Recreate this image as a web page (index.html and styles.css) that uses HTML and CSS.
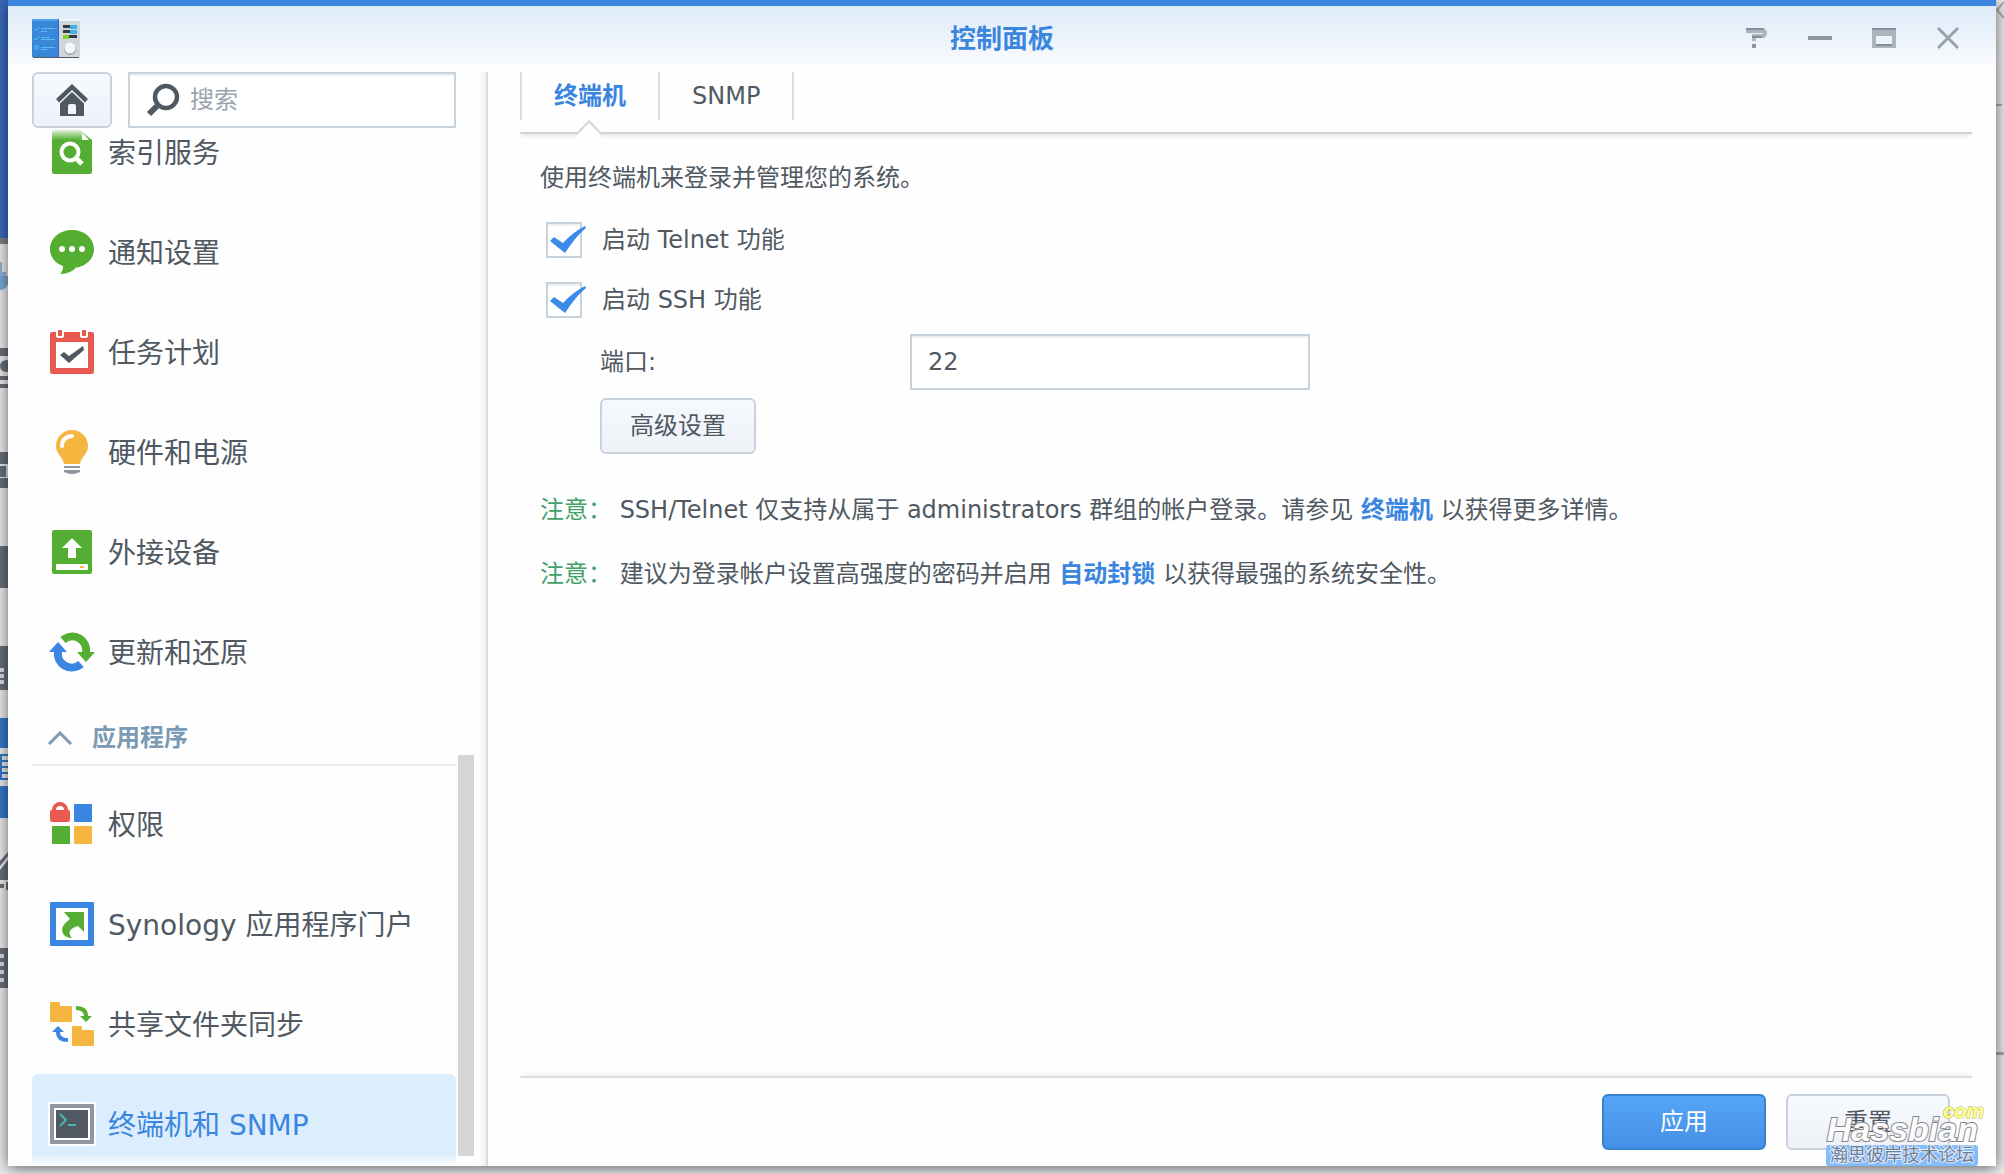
FILE: index.html
```html
<!DOCTYPE html>
<html lang="zh-CN">
<head>
<meta charset="utf-8">
<title>控制面板</title>
<link rel="stylesheet" href="styles.css">
</head>
<body>
<div class="desktop">
  <svg class="desk-left" width="8" height="1174" aria-hidden="true">
    <rect width="8" height="238" fill="#3a6cc0"/>
    <rect y="238" width="8" height="6" fill="#80858c"/>
    <path d="M0 262h2v10h4v6H0z" fill="#8fb4d4"/><path d="M0 276h8v8q-3 6-8 6z" fill="#7ba9d4"/>
    <g fill="#67707a">
      <path d="M0 348h8v8H0zM8 360q-8 0-8 6t8 6zM0 376h8v4H0zM0 384h8v4H0z"/>
      <path d="M0 452h8v12H0zM0 466h6v11H0zM0 478h8v10H0z"/>
      <path d="M0 546h8v42H0z"/>
      <path d="M0 646h8v44H0z"/>
      <path d="M0 861 8 852v4L0 866zM0 870 8 860v20H0zM0 884h4v4H0zM6 882h2v8H6z"/>
      <path d="M0 948h8v40H0z"/>
    </g>
    <path d="M0 668h4v4H0zm0 6h4v4H0zm0 6h4v4H0zM0 954h4v4H0zm0 8h4v4H0zm0 8h4v4H0zm0 8h4v4H0z" fill="#ddd"/>
    <path d="M0 718h8v30H0zM0 754h8v2H2v22h6v2H0zM2 760h6v2H2zm0 6h6v2H2zm0 6h6v2H2zM0 786h8v32H0z" fill="#3379cc"/>
  </svg>
  <svg class="desk-right" width="8" height="1174" aria-hidden="true">
    <path d="M8 2 1 10l7 8" fill="none" stroke="#b0b0b0" stroke-width="2"/>
    <path d="M0 104h6v2H0zM0 1052h8v3H0z" fill="#a8a8a8"/>
  </svg>

  <main class="window">
    <header class="titlebar">
      <svg class="app-icon" width="48" height="40" viewBox="0 0 48 40" aria-hidden="true">
        <rect x="1" y="36" width="46" height="3" fill="#555c63"/>
        <rect width="28" height="38" fill="#3a86d8"/><rect width="27" height="2" fill="#4aa5ee"/><rect x="26" width="2" height="38" fill="#2a6cc4"/>
        <rect x="27" width="21" height="38" fill="#cfd6dc"/><rect x="27" width="21" height="2" fill="#f4f5f6"/>
        <path d="M2 10l2 2 3-4M2 19l2 2 3-4M3 27h3v3H3zM9 9.500h14M9 12.500h6M9 18.500h9M9 20.500h14M9 28.500h14M9 30.500h6" fill="none" stroke="#55bdf2" stroke-width="1"/>
        <path d="M31 6h14v3H31zM31 11h14v3H31zM31 16h14v3H31z" fill="#363c44"/>
        <path d="M38 6h7v4h-7zM38 11h7v4h-7z" fill="#3fb0ef"/><path d="M31 16h6v4h-6z" fill="#7fd22e"/>
        <circle cx="38" cy="30" r="6" fill="#9ba4ac"/><circle cx="38" cy="29" r="5.500" fill="#f5f8fa"/>
      </svg>
      <h1 class="window-title">控制面板</h1>
      <div class="window-tools">
        <button class="tool" type="button" aria-label="帮助"><svg width="24" height="24" viewBox="-2 0 24 24"><path d="M0 5h17q2 0 2 2v0q0 3-3 3H8v5" fill="none" stroke="#acb4bd" stroke-width="4"/><path d="M0 3h18M6 11h10" stroke="#868f99" stroke-width="2"/><path d="M6 18h4v4H6z" fill="#8d959f"/></svg></button>
        <button class="tool" type="button" aria-label="最小化"><svg width="24" height="24" viewBox="0 0 24 24"><path d="M0 10h24v4H0z" fill="#8e97a1"/></svg></button>
        <button class="tool" type="button" aria-label="最大化"><svg width="24" height="24" viewBox="0 0 24 24"><path fill-rule="evenodd" d="M0 2h24v20H0zM4 10v10h16V10z" fill="#acb4bd"/><path d="M0 2h24v2H0zM4 18h16v2H4z" fill="#868f99"/></svg></button>
        <button class="tool" type="button" aria-label="关闭"><svg width="24" height="24" viewBox="0 0 24 24"><path d="M2 2 22 22M22 2 2 22" fill="none" stroke="#98a1ab" stroke-width="3"/></svg></button>
      </div>
    </header>

    <div class="columns">
      <aside class="sidebar">
        <div class="search-row">
          <button class="button home" type="button" aria-label="主页"><svg width="32" height="32" viewBox="0 0 32 32"><path d="M16 0 32 15l-3 3.500L16 6 3 18.500 0 15z" fill="#505962"/><path fill-rule="evenodd" d="M4 19.500 16 8l12 11.500V32H4zM12 30h8v-8q0-2-2-2h-4q-2 0-2 2z" fill="#505962"/></svg></button>
          <label class="search">
            <svg width="34" height="34" viewBox="0 0 34 34"><circle cx="20" cy="14" r="11" fill="none" stroke="#505962" stroke-width="4.500"/><path d="M11 23 3 31" stroke="#505962" stroke-width="6"/></svg>
            <input type="search" placeholder="搜索" aria-label="搜索">
          </label>
        </div>
        <div class="list-area">
          <nav class="list">
            <div class="list-scroll">
              <a class="item" href="#index"><svg class="icon" viewBox="0 0 48 48"><path d="M4 4q0-2 2-2h26l12 10v32q0 2-2 2H6q-2 0-2-2z" fill="#53ae32"/><path d="M34 5v7h7z" fill="#fff"/><circle cx="22" cy="24" r="8.500" fill="none" stroke="#fff" stroke-width="4"/><path d="M28 30l6 6" stroke="#fff" stroke-width="5"/></svg>索引服务</a>
              <a class="item" href="#notify"><svg class="icon" viewBox="0 0 48 48"><path d="M24 2c12 0 22 8 22 19S36 39 28 39.500C25 43 20 46 12 46c2-2 3-4 3-8C7 35 2 29 2 21 2 10 12 2 24 2z" fill="#53ae32"/><g fill="#fff"><circle cx="14" cy="21" r="3"/><circle cx="24" cy="21" r="3"/><circle cx="34" cy="21" r="3"/></g></svg>通知设置</a>
              <a class="item" href="#tasks"><svg class="icon" viewBox="0 0 48 48"><path d="M4 4h4v4q0 2 2 2h4q2 0 2-2V4h16v4q0 2 2 2h4q2 0 2-2V4h4q2 0 2 2v38q0 2-2 2H4q-2 0-2-2V6q0-2 2-2zM10 2h4v6h-4zM34 2h4v6h-4z" fill="#e8594f"/><path d="M8 14h32v26H8z" fill="#fff"/><path d="M12 27l4-3 5 4 14-10 1 4-15 13z" fill="#505962"/></svg>任务计划</a>
              <a class="item" href="#power"><svg class="icon" viewBox="0 0 48 48"><path d="M24 2c9 0 16 7 16 16 0 8-7 11-8 18H16C15 29 8 26 8 18 8 9 15 2 24 2z" fill="#f4b63f"/><path d="M14 18q0-9 10-10" fill="none" stroke="#fff" stroke-width="4" stroke-linecap="round"/><path d="M16 38h16v2H16zM16 42h16v2q-4 2-8 2t-8-2z" fill="#8e97a1"/></svg>硬件和电源</a>
              <a class="item" href="#devices"><svg class="icon" viewBox="0 0 48 48"><rect x="4" y="2" width="40" height="44" rx="2" fill="#53ae32"/><path d="M24 10 34 20h-6v10h-8V20h-6z" fill="#fff"/><rect x="8" y="36" width="32" height="6" rx="1" fill="#fff"/><path d="M32 38h4v2h-4z" fill="#f4b63f"/></svg>外接设备</a>
              <a class="item" href="#update"><svg class="icon" viewBox="0 0 48 48"><path d="M15 12A14 14 0 0 1 38 25" fill="none" stroke="#53ae32" stroke-width="8"/><path d="M29 24h18L38 34z" fill="#53ae32"/><path d="M33 36A14 14 0 0 1 10 23" fill="none" stroke="#3a86e0" stroke-width="8"/><path d="M1 24h18L10 14z" fill="#3a86e0"/></svg>更新和还原</a>
              <h2 class="section"><svg width="24" height="14" viewBox="0 0 24 14"><path d="M1 13 12 2l11 11" fill="none" stroke="#7a9ab5" stroke-width="3"/></svg>应用程序</h2>
              <a class="item" href="#privileges"><svg class="icon" viewBox="0 0 48 48"><path d="M6 13v-3a6 6 0 0 1 12 0v3" fill="none" stroke="#e8594f" stroke-width="4"/><rect x="2" y="10" width="20" height="12" rx="2" fill="#e8594f"/><rect x="26" y="4" width="18" height="18" rx="1" fill="#3a86e0"/><rect x="4" y="26" width="18" height="18" rx="1" fill="#53ae32"/><rect x="26" y="26" width="18" height="18" rx="1" fill="#f4b63f"/></svg>权限</a>
              <a class="item" href="#portal"><svg class="icon" viewBox="0 0 48 48"><rect x="2" y="2" width="44" height="44" rx="1" fill="#3a86e0"/><path d="M8 8h32v32H8z" fill="#fff"/><path d="M16 12h20v20l-6-6q-13 4-6 12-9 0-10-8 0-5 8-11z" fill="#53ae32"/></svg>Synology 应用程序门户</a>
              <a class="item" href="#sync"><svg class="icon" viewBox="0 0 48 48"><path d="M2 3q0-1 1-1h8q1 0 1 1v3h11q1 0 1 1v14q0 1-1 1H3q-1 0-1-1zM24 27q0-1 1-1h8q1 0 1 1v3h11q1 0 1 1v14q0 1-1 1H25q-1 0-1-1z" fill="#f4b63f"/><path d="M28 8q10 0 10 8" fill="none" stroke="#53ae32" stroke-width="4"/><path d="M32 16h12l-6 6z" fill="#53ae32"/><path d="M20 40q-10 0-10-8" fill="none" stroke="#3a86e0" stroke-width="4"/><path d="M4 32h12l-6-6z" fill="#3a86e0"/></svg>共享文件夹同步</a>
              <a class="item selected" href="#terminal" aria-current="page"><svg class="icon" viewBox="0 0 48 48"><rect y="2" width="48" height="44" rx="3" fill="#fff"/><rect x="2" y="4" width="44" height="40" rx="1" fill="#8e97a1"/><path d="M6 8h36v32H6z" fill="#fff"/><path d="M8 10h32v28H8z" fill="#505962"/><path d="M12 14l6 6-6 6M20 25h8" fill="none" stroke="#45b8bd" stroke-width="2"/></svg>终端机和 SNMP</a>
            </div>
          </nav>
          <div class="track"><div class="thumb"></div></div>
        </div>
      </aside>

      <section class="content">
        <div class="tabs" role="tablist">
          <button class="tab active" type="button" role="tab" aria-selected="true">终端机<svg class="notch" width="28" height="18" viewBox="0 0 28 18" aria-hidden="true"><path d="M2 13 14 1l12 12v5H2z" fill="#fefefe"/><path d="M1 13.500h1L14 1.500l12 12h1" fill="none" stroke="#d4d4d4" stroke-width="2"/></svg></button>
          <button class="tab" type="button" role="tab" aria-selected="false">SNMP</button>
        </div>
        <form class="panel">
          <p class="intro">使用终端机来登录并管理您的系统。</p>
          <label class="check-row"><span class="check"><input type="checkbox" checked><svg width="36" height="28" viewBox="0 0 36 28"><path d="M0 15l4-4 9 6Q23 6 35 0l1 2Q26 10 15 27z" fill="#3a8bea"/></svg></span>启动 Telnet 功能</label>
          <label class="check-row"><span class="check"><input type="checkbox" checked><svg width="36" height="28" viewBox="0 0 36 28"><path d="M0 15l4-4 9 6Q23 6 35 0l1 2Q26 10 15 27z" fill="#3a8bea"/></svg></span>启动 SSH 功能</label>
          <div class="field-row"><label for="port">端口:</label><input class="field" id="port" type="text" value="22"></div>
          <button class="button advanced" type="button">高级设置</button>
          <p class="note"><span class="note-label">注意：</span> SSH/Telnet 仅支持从属于 administrators 群组的帐户登录。请参见 <a href="#help">终端机</a> 以获得更多详情。</p>
          <p class="note"><span class="note-label">注意：</span> 建议为登录帐户设置高强度的密码并启用 <a href="#autoblock">自动封锁</a> 以获得最强的系统安全性。</p>
        </form>
        <footer class="actions">
          <button class="button primary" type="button">应用</button>
          <button class="button reset" type="button">重置</button>
        </footer>
      </section>
    </div>
  </main>

  <div class="watermark">
    <span class="wm-com">com</span>
    <span class="wm-name">Hassbian</span>
    <span class="wm-cn">瀚思彼岸技术论坛</span>
  </div>
</div>
</body>
</html>
```
FILE: styles.css
```css
* { box-sizing: border-box; }

body {
  margin: 0;
  color: #505962;
  font: 24px/36px "DejaVu Sans", "Noto Sans CJK SC", sans-serif;
}

button, input { font: inherit; color: inherit; }

.desktop {
  position: relative;
  display: flex;
  height: 100vh;
  padding: 0 8px 8px;
  overflow: hidden;
  background: #ececec;
}

.desk-left { position: absolute; left: 0; top: 0; }
.desk-right { position: absolute; right: 0; top: 0; }

.window {
  position: relative;
  display: flex;
  flex: 1;
  flex-direction: column;
  min-width: 0;
  border-top: 6px solid #3a86de;
  background: linear-gradient(#dcebf7, #eef4fc 36px, #fefefe 66px);
  box-shadow: 0 2px 14px rgba(0, 0, 0, .6);
}

.titlebar {
  display: grid;
  grid-template-columns: 1fr auto 1fr;
  align-items: center;
  height: 66px;
  padding: 0 24px;
}

.window-title { margin: 0; color: #3a86de; font-size: 26px; line-height: 36px; }
.window-tools { display: flex; justify-content: flex-end; gap: 40px; margin: 0 12px 2px 0; }
.tool { display: flex; padding: 0; border: 0; background: none; }

.columns { display: flex; flex: 1; min-height: 0; }

.sidebar {
  display: flex;
  flex-direction: column;
  width: 480px;
  padding-left: 24px;
  border-right: 2px solid #dcdcdc;
  background: linear-gradient(to left, #f0f0f0, #fefefe 8px);
}

.search-row { display: flex; gap: 16px; padding-right: 30px; }

.button {
  height: 56px;
  padding: 0;
  border: 2px solid #c8d2dc;
  border-radius: 6px;
  background: linear-gradient(#f6f9fe, #eef1f7);
}

.home { display: flex; align-items: center; justify-content: center; width: 80px; }

.search {
  display: flex;
  flex: 1;
  align-items: center;
  gap: 10px;
  height: 56px;
  min-width: 0;
  padding: 0 16px;
  border: 2px solid #c8d2dc;
  background: #fff;
  box-shadow: inset 0 2px #f0f0f0;
}

.search input { flex: 1; min-width: 0; padding: 0; border: 0; outline: 0; background: none; }
.search input::placeholder { color: #9aa3ad; opacity: 1; }

.list-area { display: flex; flex: 1; min-height: 0; gap: 2px; padding-right: 12px; }
.list { position: relative; flex: 1; overflow: hidden; }
.list-scroll { margin-top: -26px; }

.list::before, .list::after { content: ""; position: absolute; left: 0; right: 0; height: 12px; }
.list::before { top: 0; background: linear-gradient(#fefefe, rgba(254, 254, 254, 0)); }
.list::after { bottom: 0; background: linear-gradient(rgba(254, 254, 254, 0), #fefefe); }

.item {
  display: flex;
  align-items: center;
  gap: 12px;
  height: 100px;
  padding: 4px 0 0 16px;
  color: #505962;
  font-size: 28px;
  text-decoration: none;
}

.item.selected { border-radius: 6px; background: #dceefd; color: #3a86de; }
.icon { width: 48px; height: 48px; margin-bottom: 4px; }

.section {
  display: flex;
  align-items: center;
  gap: 20px;
  height: 64px;
  margin: 0 0 8px;
  padding: 10px 0 0 16px;
  border-bottom: 2px solid #ebeef4;
  color: #7a9ab5;
  font-size: 24px;
}

.track { display: flex; flex-direction: column; justify-content: flex-end; width: 16px; padding-bottom: 10px; }
.thumb { height: 39%; background: #d4d5d7; }

.content { display: flex; flex: 1; flex-direction: column; min-width: 0; padding: 0 24px 0 32px; background: #fefefe; }

.tabs { display: flex; height: 62px; border-bottom: 2px solid #d4d4d4; box-shadow: 0 4px 4px -2px #e4e4e4; }

.tab {
  position: relative;
  height: 48px;
  padding: 0 32px;
  border: 0;
  border-left: 2px solid #d5dfe9;
  background: none;
}

.tab:last-child { border-right: 2px solid #d5dfe9; }
.tab.active { color: #3a86de; font-weight: bold; }
.notch { position: absolute; left: 50%; top: 48px; margin-left: -15px; }

.panel { display: flex; flex: 1; flex-direction: column; align-items: flex-start; padding: 26px 20px 0; }
.intro { margin: 0 0 14px; }

.check-row { display: flex; align-items: center; gap: 20px; height: 60px; padding-left: 6px; }
.check { position: relative; display: flex; }
.check input {
  width: 36px;
  height: 36px;
  margin: 0;
  appearance: none;
  border: 2px solid #c8d2dc;
  background: #fff;
  box-shadow: inset 0 2px #f0f0f0;
}
.check svg { position: absolute; left: 4px; top: 4px; }

.field-row { display: flex; align-items: center; width: 100%; margin-top: 4px; padding-left: 60px; }
.field-row label { width: 310px; }
.field {
  width: 400px;
  height: 56px;
  padding: 0 16px;
  border: 2px solid #c8d2dc;
  background: #fff;
  box-shadow: inset 0 2px #f0f0f0;
}

.advanced { width: 156px; margin: 8px 0 38px 60px; }
.note { margin: 0 0 28px; }
.note-label { color: #42a068; }
.note a { color: #3a86de; font-weight: bold; text-decoration: none; }

.actions {
  display: flex;
  justify-content: flex-end;
  gap: 20px;
  padding: 16px 22px;
  border-top: 2px solid #dcdcdc;
  box-shadow: 0 -4px 4px -2px #f0f0f0;
}

.actions .button { width: 164px; }
.actions .primary { border-color: #3a80d2; background: linear-gradient(#56a5f6, #4490e6); color: #fff; }

.watermark {
  position: absolute;
  right: 20px;
  bottom: 8px;
  display: flex;
  flex-direction: column;
  align-items: flex-end;
  font-family: "Liberation Sans", "Noto Sans CJK SC", sans-serif;
}

.wm-com { height: 10px; color: #ffff80; font: italic bold 20px/16px "Liberation Sans", sans-serif; -webkit-text-stroke: 1px #b0b070; paint-order: stroke fill; }
.wm-name { margin-right: 6px; color: #fcfcfc; font: italic bold 34px/32px "Liberation Sans", sans-serif; -webkit-text-stroke: 2px #888; paint-order: stroke fill; }
.wm-cn { width: 152px; margin-right: 6px; border-radius: 3px; background: #84bdff; color: #6d7f98; font-size: 18px; line-height: 21px; text-align: center; -webkit-text-stroke: 2px #e0ecfa; paint-order: stroke fill; }
```
